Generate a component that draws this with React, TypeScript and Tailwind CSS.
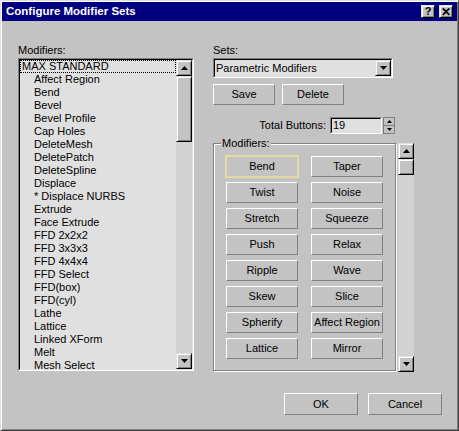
import React from "react";

const FONT = { fontFamily: '"Liberation Sans", Arial, sans-serif' };

const raised =
  "border border-t-white border-l-white border-b-[#808080] border-r-[#808080] bg-[#c3c3c3]";
const scrollRaised =
  "border border-t-[#dfdfdf] border-l-[#dfdfdf] border-b-black border-r-black bg-[#c3c3c3] shadow-[inset_1px_1px_0_#fff,inset_-1px_-1px_0_#808080]";
const sunkenOuter = "border border-t-[#808080] border-l-[#808080] border-b-white border-r-white";
const sunkenInner = "border border-t-black border-l-black border-b-[#dfdfdf] border-r-[#dfdfdf]";

const listItems = [
  "Affect Region",
  "Bend",
  "Bevel",
  "Bevel Profile",
  "Cap Holes",
  "DeleteMesh",
  "DeletePatch",
  "DeleteSpline",
  "Displace",
  "* Displace NURBS",
  "Extrude",
  "Face Extrude",
  "FFD 2x2x2",
  "FFD 3x3x3",
  "FFD 4x4x4",
  "FFD Select",
  "FFD(box)",
  "FFD(cyl)",
  "Lathe",
  "Lattice",
  "Linked XForm",
  "Melt",
  "Mesh Select",
];

const modButtons = [
  "Bend",
  "Taper",
  "Twist",
  "Noise",
  "Stretch",
  "Squeeze",
  "Push",
  "Relax",
  "Ripple",
  "Wave",
  "Skew",
  "Slice",
  "Spherify",
  "Affect Region",
  "Lattice",
  "Mirror",
];

function Tri({ up, w = 7, h = 4 }: { up?: boolean; w?: number; h?: number }) {
  return (
    <svg width={w} height={h} viewBox={`0 0 ${w} ${h}`}>
      <polygon points={up ? `${w / 2},0 ${w},${h} 0,${h}` : `0,0 ${w},0 ${w / 2},${h}`} fill="#000" />
    </svg>
  );
}

function ScrollBtn({ up }: { up?: boolean }) {
  return (
    <div className={`flex h-[16px] w-[16px] shrink-0 items-center justify-center ${scrollRaised}`}>
      <Tri up={up} />
    </div>
  );
}

function ScrollBar({ thumb }: { thumb: number }) {
  return (
    <div className="flex w-[16px] shrink-0 flex-col bg-[#d2d2d2]">
      <ScrollBtn up />
      <div className={`w-[16px] shrink-0 ${scrollRaised}`} style={{ height: thumb }} />
      <div className="flex-1" />
      <ScrollBtn />
    </div>
  );
}

function Btn({ label, w, h, hot }: { label: string; w: number; h: number; hot?: boolean }) {
  return (
    <div
      className={`flex items-center justify-center text-[11px] leading-[13px] text-black ${
        hot
          ? "border border-[#e4d698] bg-[#c3c3c3] shadow-[0_0_0_1px_#e9dda6]"
          : raised
      }`}
      style={{ width: w, height: h }}
    >
      {label}
    </div>
  );
}

export default function App() {
  return (
    <div
      style={FONT}
      className="h-[431px] w-[459px] border border-t-[#dfdfdf] border-l-[#dfdfdf] border-b-[#404040] border-r-[#404040] bg-[#c3c3c3] p-[1px] text-[11px] leading-[13px] text-black shadow-[inset_1px_1px_0_#fff,inset_-1px_-1px_0_#808080]"
    >
      {/* title bar */}
      <div className="flex h-[19px] items-center bg-[#000080] pl-[4px] pr-[4px]">
        <span className="text-[11.5px] font-bold text-white">Configure Modifier Sets</span>
        <div className="ml-auto flex gap-[4px]">
          <div className={`flex h-[13px] w-[14px] items-center justify-center text-[11px] font-bold leading-none ${scrollRaised}`}>
            ?
          </div>
          <div className={`flex h-[13px] w-[14px] items-center justify-center text-[12px] font-bold leading-none ${scrollRaised}`}>
            ✕
          </div>
        </div>
      </div>

      {/* body */}
      <div className="flex gap-[19px] pl-[16px] pt-[23px]">
        {/* left column */}
        <div className="flex w-[176px] flex-col">
          <div className="mb-[1px] h-[13px]">Modifiers:</div>
          <div className={`flex h-[313px] bg-[#e0e0e0] ${sunkenOuter}`}>
            <div className={`flex flex-1 overflow-hidden ${sunkenInner}`}>
              <ul className="flex-1 overflow-hidden">
                <li className="h-[13px] border border-dotted border-black pl-[1px] leading-[11px]">MAX STANDARD</li>
                {listItems.map((it) => (
                  <li key={it} className="h-[13px] whitespace-nowrap pl-[14px]">
                    {it}
                  </li>
                ))}
              </ul>
              <ScrollBar thumb={66} />
            </div>
          </div>
        </div>

        {/* right column */}
        <div className="flex w-[201px] flex-col">
          <div className="mb-[1px] h-[13px]">Sets:</div>
          <div className={`flex h-[20px] w-[180px] bg-[#e0e0e0] ${sunkenOuter}`}>
            <div className={`flex flex-1 items-center ${sunkenInner}`}>
              <span className="flex-1 pl-[1px]">Parametric Modifiers</span>
              <ScrollBtn />
            </div>
          </div>
          <div className="mt-[6px] flex gap-[7px]">
            <Btn label="Save" w={62} h={21} />
            <Btn label="Delete" w={62} h={21} />
          </div>
          <div className="mt-[12px] flex h-[17px] items-center justify-end pr-[19px]">
            <span className="mr-[4px]">Total Buttons:</span>
            <div className={`flex h-[17px] w-[52px] bg-[#e0e0e0] ${sunkenOuter}`}>
              <div className={`flex flex-1 items-center pl-[1px] ${sunkenInner}`}>19</div>
            </div>
            <div className="ml-[1px] flex h-[17px] w-[12px] flex-col border border-[#808080] bg-[#c3c3c3]">
              <div className="flex flex-1 items-center justify-center border-b border-[#808080]">
                <Tri up w={5} h={3} />
              </div>
              <div className="flex flex-1 items-center justify-center">
                <Tri w={5} h={3} />
              </div>
            </div>
          </div>
          <div className="mt-[9px] flex gap-[2px]">
            <div className="relative h-[228px] w-[183px] border border-[#808080] shadow-[1px_1px_0_#fff,inset_1px_1px_0_#fff]">
              <span className="absolute left-[7px] top-[-7px] bg-[#c3c3c3] px-[1px]">Modifiers:</span>
              <div className="grid grid-cols-[72px_72px] gap-x-[13px] gap-y-[5px] pl-[12px] pt-[12px]">
                {modButtons.map((b, i) => (
                  <Btn key={b} label={b} w={72} h={21} hot={i === 0} />
                ))}
              </div>
            </div>
            <div className="flex h-[229px]">
              <ScrollBar thumb={16} />
            </div>
          </div>
        </div>
      </div>

      {/* bottom buttons */}
      <div className="mt-[21px] flex justify-end gap-[10px] pr-[15px]">
        <Btn label="OK" w={74} h={22} />
        <Btn label="Cancel" w={74} h={22} />
      </div>
    </div>
  );
}
